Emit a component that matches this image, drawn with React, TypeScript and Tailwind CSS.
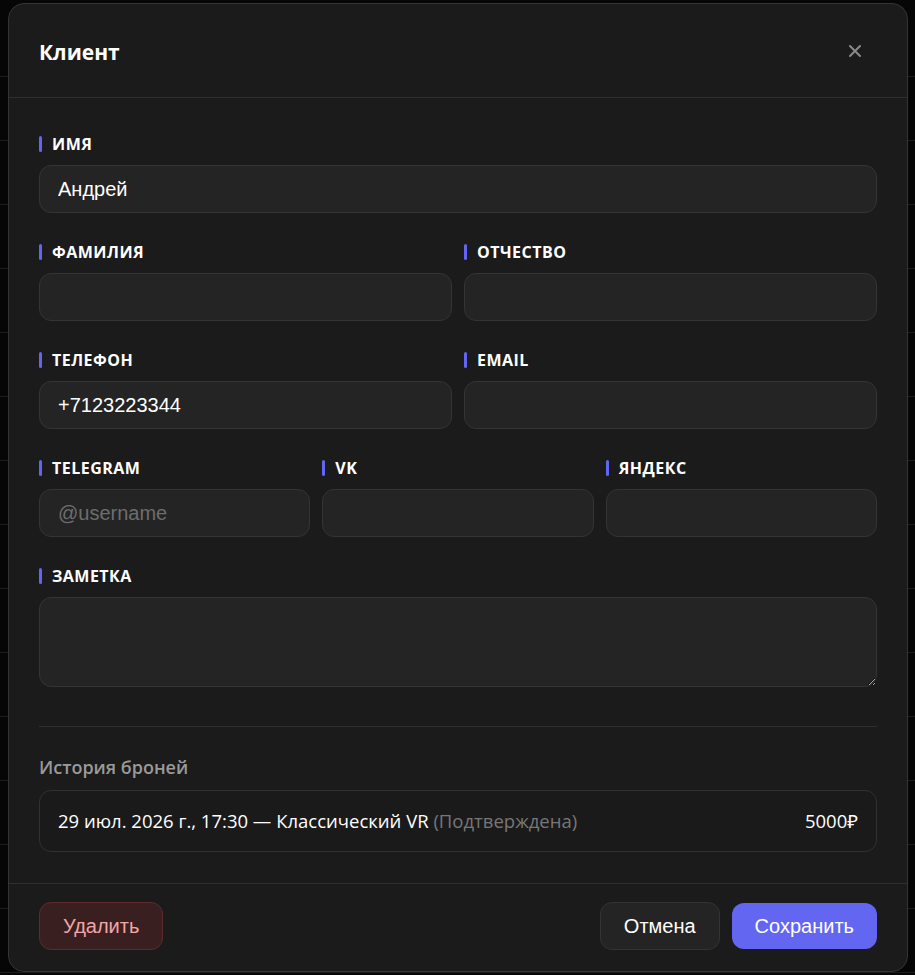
import React from 'react';

type Field = {
  label: string;
  value?: string;
  placeholder?: string;
};

const rows: Field[][] = [
  [{ label: 'Имя', value: 'Андрей' }],
  [{ label: 'Фамилия' }, { label: 'Отчество' }],
  [{ label: 'Телефон', value: '+7123223344' }, { label: 'Email' }],
  [{ label: 'Telegram', placeholder: '@username' }, { label: 'VK' }, { label: 'Яндекс' }],
];

const gridCols: Record<number, string> = {
  1: 'grid-cols-1',
  2: 'grid-cols-2',
  3: 'grid-cols-3',
};

const sans = "font-['Open_Sans','Noto_Sans',sans-serif]";
const arial = "font-['Liberation_Sans',Arial,sans-serif]";

const FieldLabel: React.FC<{ text: string }> = ({ text }) => (
  <div className="flex items-center gap-[10px] h-[26px] pt-[2px]">
    <span className="w-[3px] h-4 rounded-full bg-[#6366f1]" />
    <span className={`${sans} text-[16px] font-bold uppercase tracking-[0.03em] text-white`}>{text}</span>
  </div>
);

const FieldInput: React.FC<{ field: Field }> = ({ field }) => (
  <label className="flex flex-col gap-[9px]">
    <FieldLabel text={field.label} />
    <input
      defaultValue={field.value}
      placeholder={field.placeholder}
      className={`${arial} h-12 w-full rounded-xl border border-[#343434] bg-[#242424] px-[18px] text-[20px] text-white outline-none placeholder:text-[#6d6d6d]`}
    />
  </label>
);

// faint rows of the page table, mostly hidden under the dialog
const Backdrop: React.FC = () => (
  <div className="flex flex-col">
    <div className="h-[77px] border-b border-[#1c1c1c]" />
    {Array.from({ length: 14 }).map((_, i) => (
      <div key={i} className="h-[64px] border-b border-[#1c1c1c]" />
    ))}
  </div>
);

export default function App() {
  return (
    <div className="relative w-[915px] h-[975px] overflow-hidden bg-[#060606]">
      <Backdrop />

      <div className="absolute left-[8px] top-[3px] w-[900px] rounded-2xl border border-[#343434] bg-[#1b1b1b] flex flex-col">
        <header className="flex items-center justify-between px-[30px] h-[94px] border-b border-[#2f2f2f]">
          <h2 className={`${sans} text-[21px] font-bold text-white pt-1`}>Клиент</h2>
          <button className="mr-[15px] text-[#8a8a8a]">
            <svg width="14" height="14" viewBox="0 0 14 14" fill="none" stroke="currentColor" strokeWidth="2" strokeLinecap="round">
              <path d="M2 2l10 10M12 2L2 12" />
            </svg>
          </button>
        </header>

        <div className="px-[30px] pt-[32px] pb-[31px] flex flex-col">
          <div className="flex flex-col gap-[25px]">
            {rows.map((row, i) => (
              <div key={i} className={`grid ${gridCols[row.length]} gap-3`}>
                {row.map((f) => (
                  <FieldInput key={f.label} field={f} />
                ))}
              </div>
            ))}
            <label className="flex flex-col gap-[9px]">
              <FieldLabel text="Заметка" />
              <textarea
                className={`${arial} h-[90px] w-full rounded-xl border border-[#343434] bg-[#242424] px-[18px] py-3 text-[20px] text-white outline-none [color-scheme:dark]`}
              />
            </label>
          </div>

          <div className="mt-[39px] border-t border-[#2f2f2f] pt-[27px]">
            <h3 className={`${sans} text-[18px] font-semibold text-[#9a9a9a]`}>История броней</h3>
            <div className="mt-[9px] flex h-[62px] items-center justify-between rounded-xl border border-[#313131] bg-[#1a1a1a] px-[18px]">
              <span className={`${sans} text-[18.5px] text-white`}>
                29 июл. 2026 г., 17:30 — Классический VR <span className="text-[#777777]">(Подтверждена)</span>
              </span>
              <span className={`${sans} text-[18.5px] text-white`}>5000₽</span>
            </div>
          </div>
        </div>

        <footer className="flex items-center justify-between border-t border-[#2f2f2f] px-[30px] pt-[18px] pb-[21px]">
          <button className={`${arial} h-12 rounded-xl border border-[#5c2b2e] bg-[#3a1f21] px-[23px] text-[20px] text-[#f3a5a5]`}>
            Удалить
          </button>
          <div className="flex items-center gap-3">
            <button className={`${arial} h-12 rounded-xl border border-[#343434] bg-[#242424] px-[23px] text-[20px] text-white`}>
              Отмена
            </button>
            <button className={`${arial} h-[46px] rounded-xl bg-[#6366f1] px-[23px] text-[20px] text-white`}>
              Сохранить
            </button>
          </div>
        </footer>
      </div>
    </div>
  );
}
